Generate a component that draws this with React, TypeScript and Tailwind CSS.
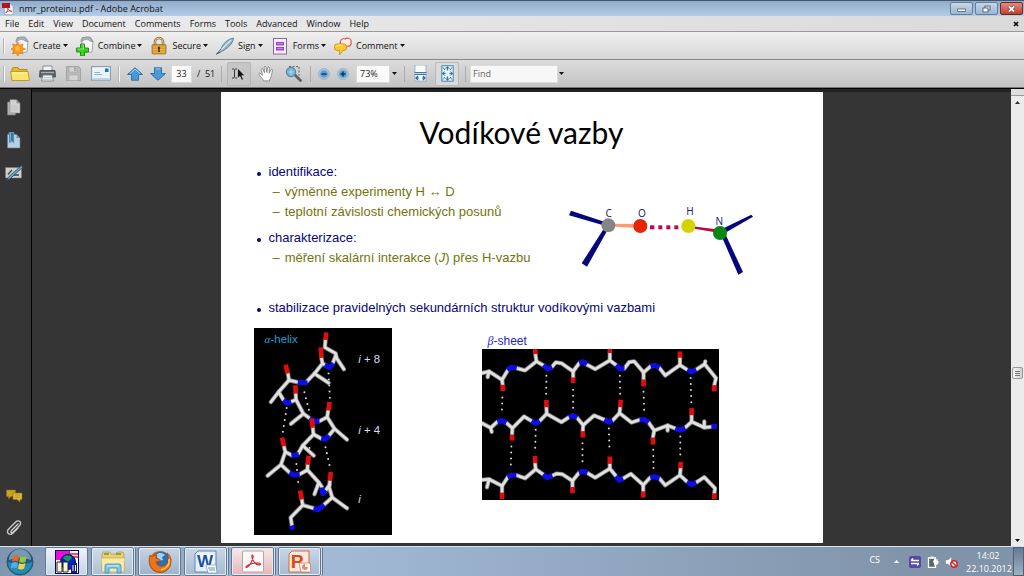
import { useState } from "react";
import type { ReactNode } from "react";

type Seg = number[];

const helixBonds: Seg[] = [
  [238, 60, 236, 82, 268, 100, 272, 115, 293, 147], [268, 108, 260, 128], [226, 115, 229, 130, 205, 160, 247, 188],
  [229, 130, 242, 138], [205, 160, 182, 184], [126, 160, 129, 180, 157, 186], [129, 180, 98, 215, 75, 245],
  [98, 215, 112, 238], [135, 244, 150, 238], [149, 220, 150, 238, 172, 280, 135, 310], [172, 280, 190, 293],
  [220, 302, 243, 290], [246, 270, 243, 290, 265, 325, 302, 357], [265, 325, 248, 345], [225, 354, 203, 342],
  [200, 320, 202, 342, 170, 375, 203, 405], [170, 375, 157, 398], [137, 404, 118, 394],
  [114, 378, 118, 394, 105, 432, 65, 465], [105, 432, 130, 455], [160, 461, 184, 448],
  [185, 430, 184, 448, 218, 485, 205, 520], [218, 485, 228, 500], [238, 510, 250, 492],
  [251, 480, 249, 500, 258, 530, 302, 562], [258, 530, 234, 551], [202, 562, 170, 553],
  [167, 535, 170, 553, 134, 590, 138, 615],
];
const helixN: Seg[] = [
  [236, 134, 250, 142, 262, 130], [155, 186, 184, 188], [112, 240, 124, 249, 136, 245], [190, 294, 205, 303, 220, 302],
  [225, 354, 238, 356, 249, 345], [136, 405, 158, 402], [130, 457, 145, 463, 161, 461], [226, 500, 230, 518, 238, 508],
  [202, 563, 216, 566, 234, 552], [136, 614, 140, 626],
];
const helixO: Seg[] = [
  [240, 37, 238, 60], [224, 82, 226, 113], [119, 134, 125, 160], [148, 195, 149, 220], [250, 244, 247, 270],
  [197, 294, 200, 322], [108, 351, 114, 377], [188, 405, 185, 432], [254, 454, 251, 480], [162, 509, 167, 536],
];
const helixDots: Seg[] = [
  [247, 160, 251, 232], [175, 216, 190, 274], [122, 263, 110, 338], [190, 382, 199, 370], [238, 380, 251, 438],
  [151, 430, 158, 500],
];

const sheetBonds: Seg[] = [
  [19, 130, 40, 125, 79, 150, 96, 122], [40, 125, 36, 142], [79, 150, 81, 165],
  [122, 115, 148, 122, 182, 95, 203, 107], [179, 73, 182, 95], [228, 112, 240, 98, 258, 101, 292, 125, 310, 101],
  [292, 125, 292, 143], [332, 104, 358, 118, 402, 92, 422, 107], [402, 70, 402, 92],
  [445, 117, 460, 97, 475, 95, 503, 128, 525, 109], [503, 128, 503, 149], [550, 114, 568, 137, 612, 106, 634, 120],
  [612, 83, 612, 106], [660, 120, 686, 103, 720, 145, 715, 166], [686, 103, 688, 95],
  [19, 280, 45, 294, 65, 276], [45, 294, 48, 306], [92, 279, 110, 295, 145, 260, 168, 274], [110, 295, 109, 314],
  [191, 274, 213, 252, 257, 277, 280, 262], [212, 232, 213, 252], [303, 263, 322, 286, 355, 257, 386, 270],
  [322, 286, 321, 304], [410, 272, 431, 250, 467, 278, 491, 270], [433, 232, 431, 250],
  [518, 278, 535, 302, 575, 287, 599, 296], [535, 302, 531, 323], [575, 287, 575, 302],
  [627, 294, 647, 276, 685, 293, 706, 291], [647, 256, 647, 276], [685, 293, 685, 275],
  [19, 450, 40, 448, 79, 468, 97, 441], [40, 448, 34, 472], [79, 468, 79, 488], [122, 436, 148, 445, 180, 418, 203, 434],
  [178, 400, 180, 418], [229, 438, 242, 431, 260, 433, 290, 453, 310, 428], [290, 453, 290, 471],
  [334, 429, 358, 443, 402, 416, 420, 438], [402, 402, 402, 416], [441, 446, 465, 432, 502, 465, 523, 443],
  [502, 465, 502, 484], [550, 445, 568, 466, 612, 436, 634, 456], [614, 415, 612, 436],
  [660, 458, 685, 442, 717, 475, 715, 490],
];
const sheetN: Seg[] = [
  [95, 121, 107, 112, 123, 115], [203, 106, 216, 118, 229, 112], [310, 99, 322, 96, 333, 104], [421, 106, 432, 117, 446, 117],
  [524, 110, 536, 107, 551, 113], [634, 120, 646, 127, 661, 120], [65, 276, 78, 272, 92, 279], [168, 273, 180, 281, 192, 273],
  [279, 262, 291, 257, 304, 264], [386, 269, 399, 277, 410, 272], [491, 270, 505, 269, 518, 278], [598, 296, 612, 301, 628, 294],
  [706, 290, 723, 290], [95, 441, 108, 436, 122, 436], [202, 434, 214, 443, 230, 437], [309, 428, 320, 424, 335, 429],
  [420, 439, 431, 451, 442, 446], [523, 443, 535, 440, 551, 445], [633, 456, 646, 464, 661, 458],
];
const sheetO: Seg[] = [
  [81, 165, 81, 184], [178, 58, 179, 73], [292, 143, 292, 160], [402, 58, 402, 70], [503, 149, 503, 170], [612, 65, 612, 84],
  [715, 166, 715, 185], [109, 314, 109, 332], [212, 210, 212, 232], [321, 304, 321, 323], [435, 210, 433, 232],
  [531, 323, 531, 344], [647, 235, 647, 256], [79, 488, 79, 508], [178, 378, 178, 400], [290, 471, 290, 490],
  [402, 380, 402, 402], [502, 484, 502, 503], [614, 396, 614, 415], [715, 490, 715, 508],
];
const sheetDots: Seg[] = [
  [80, 203, 78, 255], [212, 138, 211, 195], [292, 180, 292, 240], [432, 138, 433, 195], [503, 186, 505, 248],
  [644, 145, 646, 220], [107, 350, 105, 418], [180, 300, 178, 366], [320, 340, 320, 406], [399, 296, 401, 366],
  [532, 360, 533, 426], [613, 320, 613, 386],
];

function toPoints(s: Seg) {
  return s.join(" ");
}

function Sticks({ bonds, n, o, dots }: { bonds: Seg[]; n: Seg[]; o: Seg[]; dots: Seg[] }) {
  return (
    <g fill="none" strokeLinejoin="round">
      <g stroke="#d8d8d8" strokeWidth="6" strokeLinecap="round" strokeDasharray="0 18">
        {dots.map((s, i) => <polyline key={i} points={toPoints(s)} />)}
      </g>
      <g stroke="#858585" strokeWidth="13" strokeLinecap="round">
        {bonds.map((s, i) => <polyline key={i} points={toPoints(s)} />)}
      </g>
      <g stroke="#e2e2e2" strokeWidth="8" strokeLinecap="round">
        {bonds.map((s, i) => <polyline key={i} points={toPoints(s)} />)}
      </g>
      <g stroke="#0d0de8" strokeWidth="15">
        {n.map((s, i) => <polyline key={i} points={toPoints(s)} />)}
      </g>
      <g stroke="#e00d0d" strokeWidth="14">
        {o.map((s, i) => <polyline key={i} points={toPoints(s)} />)}
      </g>
    </g>
  );
}

function HelixFigure() {
  return (
    <svg viewBox="25 24 411 618" className="block h-[207px] w-[138px] bg-black" role="img" aria-label="α-helix">
      <Sticks bonds={helixBonds} n={helixN} o={helixO} dots={helixDots} />
      <g fontFamily="Liberation Sans, Arial, sans-serif">
        <text x="56" y="70" fontSize="34" fill="#1fa3dc">
          <tspan fontStyle="italic" fontFamily="Liberation Serif, serif">α</tspan>-helix
        </text>
        <g fontSize="34" fill="#dcdcf4">
          <text x="336" y="130"><tspan fontStyle="italic">i</tspan> + 8</text>
          <text x="336" y="341"><tspan fontStyle="italic">i</tspan> + 4</text>
          <text x="336" y="546" fontStyle="italic">i</text>
        </g>
      </g>
    </svg>
  );
}

function SheetFigure() {
  return (
    <svg viewBox="19 58 710 452" className="block h-[151px] w-[237px] bg-black" role="img" aria-label="β-sheet">
      <Sticks bonds={sheetBonds} n={sheetN} o={sheetO} dots={sheetDots} />
    </svg>
  );
}

function BondFigure() {
  return (
    <svg viewBox="0 0 660 300" className="block h-[100px] w-[220px]" role="img" aria-label="C O H N">
      <g fill="#06067c">
        <path d="M63 62 172 98 168 108 57 76z" />
        <path d="M164 112 174 118 111 230 95 220z" />
        <path d="M604 74 609 80 530 126 522 114z" />
        <path d="M513 135 525 130 579 246 565 254z" />
      </g>
      <path d="M175 101 270 102v13L175 109z" fill="#ff9a70" />
      <path d="M415 107 510 119v10L415 113z" fill="#b40a40" />
      <g fill="#b80c50">
        <rect x="300" y="106" width="13" height="12" /><rect x="325" y="106" width="12" height="12" />
        <rect x="349" y="106" width="12" height="12" /><rect x="373" y="106" width="12" height="12" />
      </g>
      <circle cx="175" cy="106" r="21" fill="#858585" />
      <circle cx="271" cy="108" r="21" fill="#e82406" />
      <circle cx="415" cy="108" r="21" fill="#d6d200" />
      <circle cx="510" cy="129" r="21" fill="#068612" />
      <g fontFamily="Noto Sans, sans-serif" fontSize="30" fill="#23237f" textAnchor="middle">
        <text x="176" y="80">C</text><text x="276" y="82">O</text>
        <text x="420" y="75">H</text><text x="508" y="104">N</text>
      </g>
    </svg>
  );
}

function Glyph({ box, className, children }: { box: string; className: string; children: ReactNode }) {
  return (
    <svg viewBox={box} className={className} aria-hidden="true">
      {children}
    </svg>
  );
}

function Caret() {
  return (
    <Glyph box="0 0 5 3" className="h-[3px] w-[5px] shrink-0">
      <path d="M0 0h5L2.500 3z" fill="#111" />
    </Glyph>
  );
}

function Grip() {
  return <span className="h-4 w-[2px] shrink-0 border-r border-[#f6f6f6] bg-[#b4b4b4]" />;
}

function Divider() {
  return <span className="h-4 w-px shrink-0 bg-[#aaa]" />;
}

const paperBack = (
  <>
    <path d="M6 1.500h8l3 3.500-1 11-10 1z" fill="#f4f6f7" stroke="#8e979c" strokeWidth=".8" />
    <path d="M5 4c2-3.500 8-4 10-2l2 4c-2-1-3 0-4-2-3-1-6 0-8 2z" fill="#aab2b6" stroke="#737c81" strokeWidth=".5" />
  </>
);

const tasks: { label: string; icon: ReactNode }[] = [
  {
    label: "Create",
    icon: (
      <>
        {paperBack}
        <path d="m7 6 1.500 3.200L12 8l-1 3.500 3.500 1.500-3.500 1.500L12 18l-3.500-1L7 20l-2-3-3.500 1 1-3.500L0 13l2.700-1.500L1.500 8 5 9z" fill="#f59a1c" stroke="#d8770b" strokeWidth=".6" />
        <circle cx="6.500" cy="12.500" r="2.500" fill="#ffb93c" />
      </>
    ),
  },
  {
    label: "Combine",
    icon: (
      <>
        {paperBack}
        <path d="M4.500 8h4v4h4v4h-4v4h-4v-4h-4v-4h4z" fill="#3fce22" stroke="#168a10" strokeWidth=".9" />
        <path d="M5.500 9h2v4h-6" fill="none" stroke="#a2f28a" strokeWidth=".7" />
      </>
    ),
  },
  {
    label: "Secure",
    icon: (
      <>
        <path d="M5 10V6a4 4 0 0 1 8 0v4" fill="none" stroke="#8f7443" strokeWidth="2.600" />
        <path d="M5 10V6a4 4 0 0 1 8 0v4" fill="none" stroke="#d9c28d" strokeWidth="1" />
        <rect x="2" y="8.500" width="14" height="9.500" rx="1" fill="#d69a35" stroke="#98691b" strokeWidth=".7" />
        <path d="M3 11h12M3 13.500h12M3 16h12" stroke="#eec063" strokeWidth=".8" />
        <path d="M9 10.500a1.300 1.300 0 0 1 .7 2.400L10 16H8l.3-3.100A1.300 1.300 0 0 1 9 10.500z" fill="#55380a" />
      </>
    ),
  },
  {
    label: "Sign",
    icon: (
      <>
        <path d="M0 18.500 5 13C7 7 12 3 17.500 2c0 3-3 9-11 13z" fill="#8fb0bf" stroke="#56727f" strokeWidth=".7" />
        <path d="M5.500 13.500 15 4" stroke="#dcecf2" strokeWidth="1.300" />
        <path d="m0 18.500 3-2.500 1.500.5z" fill="#324a55" />
      </>
    ),
  },
  {
    label: "Forms",
    icon: (
      <>
        <rect x="2.500" y="2.500" width="13" height="15.500" fill="#f7f1fb" stroke="#8568a0" />
        <rect x="5" y="6" width="8" height="3.500" fill="#a63fd0" /><rect x="5" y="11" width="8" height="3.500" fill="#a63fd0" />
        <path d="M6 7.700h6M6 12.700h6" stroke="#d9a6f0" strokeWidth=".8" />
      </>
    ),
  },
  {
    label: "Comment",
    icon: (
      <>
        <path d="M7 8c-2-3 1-6 4-5 3-2 7 0 6 3 1 3-2 5-4 4l-2 3z" fill="#fde9e6" stroke="#dd5443" strokeWidth="1.100" />
        <path d="M3 8h7q2.500 0 2.500 2.500V12q0 2.500-2.500 2.500H9L5.500 19v-4.500H3Q.5 14.500.5 12v-1.500Q.5 8 3 8z" fill="#fbc92d" stroke="#cc8c0c" strokeWidth=".8" />
        <path d="M2.500 10q.5-.8 2-.8h4" fill="none" stroke="#fff0a6" />
      </>
    ),
  },
];

const menus = ["File", "Edit", "View", "Document", "Comments", "Forms", "Tools", "Advanced", "Window", "Help"];

function ArrowIcon({ down = false }: { down?: boolean }) {
  return (
    <Glyph box="0 0 16 14" className="block h-[14px] w-[16px]">
      <path
        d={down ? "M4.500.8h7v5.700h4L8 13.300.5 6.500h4z" : "M8 .7 15.500 7.500h-4v5.700h-7V7.500h-4z"}
        fill="#4a99d6" stroke="#286ba6" strokeWidth=".9" strokeLinejoin="round"
      />
      <path d={down ? "M5.700 2h4.600" : "m3 6.500 5-4.300 5 4.300"} fill="none" stroke="#9fd2f4" strokeWidth="1" />
    </Glyph>
  );
}

function RoundIcon({ plus = false }: { plus?: boolean }) {
  return (
    <Glyph box="0 0 12 12" className="block h-[12px] w-[12px]">
      <circle cx="6" cy="6" r="5.400" fill="#a8cbe4" stroke="#8aa9c2" strokeWidth=".8" />
      <circle cx="6" cy="6" r="3.800" fill="#5ba1d4" />
      <path d={plus ? "M3.500 6h5M6 3.500v5" : "M3.500 6h5"} stroke="#12385e" strokeWidth="1.500" />
    </Glyph>
  );
}

function Toolbar() {
  const [page, setPage] = useState("33");
  const [find, setFind] = useState("");
  const [zoom, setZoom] = useState("73%");
  return (
    <div className="flex h-7 items-center border-b border-[#777] bg-gradient-to-b from-[#dcdcdc] to-[#c3c3c3] pl-[3px]">
      <Grip />
      <div className="ml-[5px] flex items-center gap-[9px]">
        <button aria-label="Open">
          <Glyph box="0 0 20 16" className="block h-4 w-5">
            <path d="M2 14V3l1-1.500h5l1 2h8V14z" fill="#e8b928" stroke="#a47f10" strokeWidth=".8" />
            <path d="M.6 5.500h17.500L19.400 14.500H2z" fill="#fde36d" stroke="#b78f17" strokeWidth=".8" />
            <path d="M2 7h15" stroke="#fff6b8" />
          </Glyph>
        </button>
        <button aria-label="Print">
          <Glyph box="0 0 17 17" className="block h-[17px] w-[17px]">
            <path d="M4 1h9v6H4z" fill="#f2f4f5" stroke="#71797d" strokeWidth=".8" />
            <path d="M1 5.500h15l.5 6.500H.5z" fill="#5b6469" stroke="#3d4549" strokeWidth=".8" />
            <path d="M2 7.500h13" stroke="#a4adb2" strokeWidth="1.200" />
            <path d="M4 10h9l1.500 6h-12z" fill="#edf1f3" stroke="#71797d" strokeWidth=".8" />
            <path d="M4.500 12.500h8M4 14.300h9" stroke="#a8b4ba" strokeWidth=".7" />
          </Glyph>
        </button>
        <button aria-label="Save" disabled>
          <Glyph box="0 0 17 17" className="block h-[17px] w-[17px]">
            <path d="M1.500 1.500h12l2 2v12h-14z" fill="#b9b9b9" stroke="#a2a2a2" />
            <path d="M4 2h8v5H4zM4 10h9v5.500H4z" fill="#d4d4d4" stroke="#a9a9a9" strokeWidth=".7" />
            <path d="M9 2.500h2v3.500H9z" fill="#a8a8a8" />
          </Glyph>
        </button>
        <button aria-label="E-mail">
          <Glyph box="0 0 20 15" className="block h-[15px] w-5">
            <rect x=".6" y=".6" width="18.800" height="13.500" fill="#eaf3fa" stroke="#7d98ac" />
            <path d="M2 12.500h16" stroke="#bed4e4" />
            <rect x="14" y="2.500" width="3.500" height="3.500" fill="#2470b8" />
            <path d="M3.500 6.500H9M3.500 8.500H11" stroke="#6c9fc9" strokeWidth=".8" />
          </Glyph>
        </button>
      </div>
      <div className="ml-[7px] flex items-center gap-[7px]">
        <Grip />
        <button aria-label="Previous page"><ArrowIcon /></button>
        <button aria-label="Next page"><ArrowIcon down /></button>
      </div>
      <input aria-label="Page" value={page} onChange={(e) => setPage(e.target.value)}
        className="ml-[5px] h-[18px] w-[21px] border border-[#d8d8d8] bg-[#fafafa] text-center text-[9px] text-[#222]" />
      <span className="ml-[5px] w-5 whitespace-nowrap text-[9px]">/&nbsp; 51</span>
      <span className="ml-[4px] flex"><Divider /></span>
      <button aria-label="Select tool" className="ml-[5px] flex h-6 w-6 items-center justify-center rounded-[2px] border border-[#b4b4b4] bg-[#c6c6c6]">
        <Glyph box="0 0 16 14" className="h-[14px] w-4">
          <path d="M1 2h1.500l1 .8 1-.8H6M3.500 2.800v7.400M1 11h1.500l1-.8 1 .8H6" fill="none" stroke="#333" strokeWidth="1" />
          <path d="M6.500 1v10.500L9 9.400l1.600 3.800 1.900-.8-1.700-3.700H14z" fill="#151515" stroke="#ececec" strokeWidth=".6" />
        </Glyph>
      </button>
      <button aria-label="Hand tool" className="ml-[7px]">
        <Glyph box="0 0 17 17" className="block h-[17px] w-[17px]">
          <path d="M5.500 15.800c-1-2.500-3.500-4.200-4.500-6.400-.5-1.300 1-1.700 1.800-.8l1.800 1.800L3.300 4.700c-.3-1.300 1.200-1.700 1.700-.4l1.500 3.500-.3-5.500c0-1.300 1.700-1.300 1.900 0l.7 5.200.8-4.800c.3-1.200 1.900-1 1.800.3l-.3 5.300 1.700-3.400c.6-1.100 2-.6 1.700.6-.8 3-1 7-3 9.500v1z" fill="#fff" stroke="#777" strokeWidth=".8" strokeLinejoin="round" />
        </Glyph>
      </button>
      <button aria-label="Marquee zoom" className="ml-[10px]">
        <Glyph box="0 0 18 17" className="block h-[17px] w-[18px]">
          <path d="M4 1.500h10v9" fill="none" stroke="#51646f" strokeDasharray="2 1.500" />
          <path d="m9.500 9.500 6 6" stroke="#596168" strokeWidth="2.800" strokeLinecap="round" />
          <circle cx="6" cy="7" r="4.600" fill="#6eb4dc" stroke="#6c8798" strokeWidth="1.200" />
          <path d="M3.500 7H9M6 4.500V10" stroke="#a9d9f2" strokeWidth="1.200" />
        </Glyph>
      </button>
      <div className="ml-[7px] flex items-center gap-[7px]">
        <Divider />
        <button aria-label="Zoom out"><RoundIcon /></button>
        <button aria-label="Zoom in"><RoundIcon plus /></button>
        <select aria-label="Zoom level" value={zoom} onChange={(e) => setZoom(e.target.value)}
          className="h-[18px] w-[34px] appearance-none border border-[#d8d8d8] bg-[#fafafa] pl-[3px] text-[9px] leading-4 text-[#222]">
          <option>73%</option>
          <option>100%</option>
        </select>
      </div>
      <span className="ml-[2px] flex"><Caret /></span>
      <span className="ml-[7px] flex"><Divider /></span>
      <button aria-label="Fit width" className="ml-[9px]">
        <Glyph box="0 0 13 17" className="block h-[17px] w-[13px]">
          <path d="M1 0h11v7.500H1zM1 9.500h11V16H1z" fill="#f6fbfe" stroke="#8aa5b8" strokeWidth=".7" />
          <path d="M.5 7.500h12M.5 9.500h12" stroke="#3c7ba8" strokeWidth="1.200" />
          <path d="m4 11-2 2 2 2M9 11l2 2-2 2M2 13h3M8 13h3" fill="none" stroke="#226ba6" strokeWidth="1.200" />
        </Glyph>
      </button>
      <button aria-label="Fit page" className="ml-2 flex h-6 w-6 items-center justify-center rounded-[2px] border border-[#b8b8b8] bg-[#dadada]">
        <Glyph box="0 0 13 17" className="h-[17px] w-[13px]">
          <path d="M.8.800h11.400v15.400H.8z" fill="#e9f5fc" stroke="#4584ae" />
          <path d="M6.500 1.500v4M6.500 11.500v4M1.500 8.500h3M8.500 8.500h3" stroke="#2d78ae" strokeWidth="1.400" />
          <path d="M4.500 3.800l2-2 2 2M4.500 13.200l2 2 2-2M3.500 6.500l-2 2 2 2M9.500 6.500l2 2-2 2M2 2.500l2 2.500M11 2.500 9 5M2 14.500 4 12M11 14.500 9 12" fill="none" stroke="#2d78ae" strokeWidth="1" />
        </Glyph>
      </button>
      <span className="ml-[6px] flex"><Divider /></span>
      <input aria-label="Find" placeholder="Find" value={find} onChange={(e) => setFind(e.target.value)}
        className="ml-[4px] h-[18px] w-[88px] border border-[#dcdcdc] bg-[#f7f7f7] pl-[2px] text-[9px] placeholder:text-[#666]" />
      <button aria-label="Find options" className="ml-px"><Caret /></button>
    </div>
  );
}

function SidePanel() {
  return (
    <nav aria-label="Panels" className="flex w-8 shrink-0 flex-col items-center border-r border-black bg-[#353535] pt-[10px] pb-[10px] pr-[3px]">
      <button aria-label="Pages" className="mb-4">
        <Glyph box="0 0 16 17" className="block h-[17px] w-4">
          <path d="M1.500 3h8v13h-8z" fill="#b2b2b2" stroke="#777" strokeWidth=".6" />
          <path d="M4 .7h6.500l3.500 3.500V14H4z" fill="#d2d2d2" stroke="#8a8a8a" strokeWidth=".6" />
          <path d="M10.500.700v3.500H14" fill="#8b8b8b" />
          <path d="M5.500 7h6M5.500 9h6M5.500 11h6" stroke="#bababa" strokeWidth=".7" />
        </Glyph>
      </button>
      <button aria-label="Bookmarks" className="mb-4">
        <Glyph box="0 0 16 17" className="block h-[17px] w-4">
          <path d="M1.500 2.500h9l3.500 3.500V16h-12.500z" fill="#b9cede" stroke="#607f97" strokeWidth=".6" />
          <path d="M10.500 2.500V6H14" fill="#7190a6" />
          <path d="M3 .5h5v11L5.500 9.200 3 11.500z" fill="#347aaa" stroke="#9fc8e0" strokeWidth=".5" />
          <path d="M4.500 1v8" stroke="#91bfdc" strokeWidth=".7" />
        </Glyph>
      </button>
      <button aria-label="Signatures">
        <Glyph box="0 0 18 16" className="block h-4 w-[18px]">
          <path d="M.5 2.500h16v10.500H.5z" fill="#cfcfcf" stroke="#777" strokeWidth=".5" />
          <path d="M3 9.500 7 5M8 10h6" fill="none" stroke="#444" strokeWidth="1.300" />
          <path d="m1.500 15.500 2-3.500L16.500.500l1.200 1.700L5 13.800z" fill="#6ba7cb" stroke="#25465c" strokeWidth=".8" />
        </Glyph>
      </button>
      <div className="flex-1" />
      <button aria-label="Comments" className="mb-4">
        <Glyph box="0 0 18 14" className="block h-[14px] w-[18px]">
          <path d="M1.500 1h9v6.500H6L3.500 10V7.500h-2z" fill="#c9a124" stroke="#8f6d11" strokeWidth=".6" strokeLinejoin="round" />
          <path d="M8 4h9v6.500h-2V13l-3-2.500H8z" fill="#e0bd3c" stroke="#8f6d11" strokeWidth=".6" strokeLinejoin="round" />
          <path d="M10 6h5M10 8.200h5" stroke="#a5831d" strokeWidth=".8" />
        </Glyph>
      </button>
      <button aria-label="Attachments">
        <Glyph box="0 0 16 17" className="block h-[17px] w-4">
          <path d="m12 5-6.500 6.500c-1.500 1.600.3 3 1.600 1.700l6.300-6.500c3-3.300-.8-6.500-3.700-3.700L2.500 10.200c-3 3.300 1.200 7 4.300 4l5-5" fill="none" stroke="#cfcfcf" strokeWidth="1.300" strokeLinecap="round" />
        </Glyph>
      </button>
    </nav>
  );
}

function Slide() {
  return (
    <article className="flex h-[451px] w-[602px] shrink-0 flex-col bg-white text-[13px] leading-5 text-[#060678] [font-family:'Liberation_Sans',Arial,sans-serif]">
      <h1 className="pt-5 text-center text-[30px] leading-10 text-black [font-family:Lato,Calibri,sans-serif]">Vodíkové vazby</h1>
      <div className="flex pt-[10px]">
        <ul className="w-[329px] pl-[36px]">
          <li>
            <Bullet>identifikace:</Bullet>
            <ul className="pl-4 text-[#74740c]">
              <Dash>výměnné experimenty H ↔ D</Dash>
              <Dash>teplotní závislosti chemických posunů</Dash>
            </ul>
          </li>
          <li className="pt-[6px]">
            <Bullet>charakterizace:</Bullet>
            <ul className="pl-4 text-[#74740c]">
              <Dash>měření skalární interakce (<i>J</i>) přes H-vazbu</Dash>
            </ul>
          </li>
        </ul>
        <div className="pt-7"><BondFigure /></div>
      </div>
      <div className="pt-2 pl-[36px]"><Bullet>stabilizace pravidelných sekundárních struktur vodíkovými vazbami</Bullet></div>
      <div className="flex gap-[90px] pt-[10px] pl-[33px]">
        <HelixFigure />
        <figure className="pt-[5px]">
          <figcaption className="pl-[6px] text-[12px] leading-4 text-[#2222d8]">
            <i className="[font-family:'Liberation_Serif',serif]">β</i>-sheet
          </figcaption>
          <SheetFigure />
        </figure>
      </div>
    </article>
  );
}

function Bullet({ children }: { children: ReactNode }) {
  return (
    <p className="flex items-center gap-2">
      <span className="mt-1 size-1 shrink-0 rounded-full bg-[#060678]" />
      {children}
    </p>
  );
}

function Dash({ children }: { children: ReactNode }) {
  return (
    <li className="flex gap-[5px]">
      <span>–</span>
      <span>{children}</span>
    </li>
  );
}

function ScrollBar() {
  return (
    <div className="flex w-[13px] shrink-0 flex-col items-center bg-[#ececec]">
      <span className="h-[7px] w-full border-b border-[#999] bg-[#dedede]" />
      <button aria-label="Scroll up" className="flex h-3 items-center">
        <Glyph box="0 0 5 3" className="h-[3px] w-[5px]"><path d="M0 3h5L2.500 0z" fill="#333" /></Glyph>
      </button>
      <div className="flex w-full flex-1 flex-col">
        <span className="grow-[260]" />
        <span className="mx-px flex h-[12px] flex-col items-center justify-center gap-px rounded-[2px] border border-[#999] bg-gradient-to-r from-[#f8f8f8] to-[#cfcfcf]">
          <i className="h-px w-[5px] bg-[#777]" /><i className="h-px w-[5px] bg-[#777]" /><i className="h-px w-[5px] bg-[#777]" />
        </span>
        <span className="grow-[155]" />
      </div>
      <button aria-label="Scroll down" className="flex h-3 items-center"><Caret /></button>
    </div>
  );
}

const apps: { label: string; tone: string; stacked?: boolean; icon: ReactNode }[] = [
  {
    label: "Commander", tone: "from-[#eef3f8] to-[#c3d3e4]",
    icon: (
      <>
        <rect x=".5" y=".5" width="23" height="23" fill="#fff" stroke="#050560" />
        <path d="M1 1h14v9H1z" fill="#f00bd8" /><path d="M13 4h10M13 7h10" stroke="#f01055" strokeWidth="1.500" />
        <circle cx="13" cy="12" r="7.500" fill="#0b20c4" stroke="#031048" />
        <path d="M8 8c3-4 8-3 9 0l-4 4zM15 16l4-3-1 5z" fill="#0b9c62" />
        <path d="M2 12h5v10H2zM8 12h5v10H8z" fill="#fdf9d8" stroke="#222" />
        <path d="M16 13h6v10h-6z" fill="#121b88" /><path d="M18 15v6M20.500 15v6" stroke="#fff" />
      </>
    ),
  },
  {
    label: "Explorer", tone: "from-[#cfdcea] to-[#aabfd6]", stacked: true,
    icon: (
      <>
        <path d="M1 5l1-3h7l1 2h5l1-2h6l1 3v16H1z" fill="#eccd70" stroke="#b39642" strokeWidth=".7" />
        <path d="M3 4h5M15 4h5" stroke="#559e4c" strokeWidth="1.500" />
        <path d="M0 8h24l-1 14H1z" fill="#fbeaa6" stroke="#c4a650" strokeWidth=".7" />
        <path d="M4 23v-7q0-2 2-2h12q2 0 2 2v7h-4v-5H8v5z" fill="#7fc4ec" stroke="#398fc2" strokeWidth=".8" />
        <path d="M6 16h12" stroke="#d9f3ff" />
      </>
    ),
  },
  {
    label: "Firefox", tone: "from-[#c5d4e4] to-[#9db3cb]",
    icon: (
      <>
        <circle cx="12" cy="12" r="11" fill="#df6510" />
        <circle cx="13" cy="10" r="8.500" fill="#2c6fb6" />
        <path d="M8 5c3-3 7-2 9 0l-3 2 1 3-4 1z" fill="#9bd4f2" />
        <path d="M2 5c-2 5-1 15 8 17 8 2 14-5 13-13-1-3-2-5-4-6 2 5 2 12-4 13-5 1-6-2-7-4l4-1c1-1 0-2-2-2l-2-1 1-3C6 5 5 6 4 7z" fill="#e8761a" stroke="#a63c0c" strokeWidth=".7" />
        <path d="M21 9c1 6-3 10-8 11" fill="none" stroke="#ffd04a" strokeWidth="1.500" />
      </>
    ),
  },
  {
    label: "Word", tone: "from-[#c9d7e7] to-[#a6bad1]", stacked: true,
    icon: (
      <>
        <path d="M4 1h18v21H1V4z" fill="#e4eef8" stroke="#5a86bb" />
        <path d="M4 4h16v12H4z" fill="#f7fbff" />
        <text x="11" y="17" textAnchor="middle" fontFamily="Liberation Sans" fontSize="17" fontWeight="700" fill="#204fa5">W</text>
        <path d="M12 15h10l1 8H14z" fill="#fff" stroke="#5a86bb" strokeWidth=".6" /><path d="M14 18h7M15 20h6" stroke="#6990c5" />
      </>
    ),
  },
  {
    label: "Adobe Acrobat", tone: "from-[#f8e9e9] to-[#e7b5b9]", stacked: true,
    icon: (
      <>
        <rect x="1.500" y="1" width="21" height="21" rx="1" fill="#faf8f8" stroke="#aaa" />
        <path d="M11.300 5c-1.300 0 .2 5.500 2.700 8 2.500 2.400 5.800 2.300 5.400 1-.4-1.400-7-1.300-11 .4-3 1.300-4.200 3-3 3.100 2.300 0 6.800-7.500 6.800-11 0-1-.4-1.500-.9-1.500z" fill="none" stroke="#cf2630" strokeWidth="1.100" />
      </>
    ),
  },
  {
    label: "PowerPoint", tone: "from-[#c9d7e7] to-[#a6bad1]", stacked: true,
    icon: (
      <>
        <path d="M4 1h17v21H1V4z" fill="#fbe9df" stroke="#d76638" />
        <text x="9" y="18" textAnchor="middle" fontFamily="Liberation Sans" fontSize="19" fontWeight="700" fill="#dc4a16">P</text>
        <path d="M11 13h11l1 9H13z" fill="#fff" stroke="#d76638" strokeWidth=".7" />
        <circle cx="17" cy="17" r="3" fill="#e78a60" /><path d="M17 17v-3a3 3 0 0 1 3 3z" fill="#fff" />
      </>
    ),
  },
];

function Taskbar() {
  return (
    <footer className="flex h-[30px] shrink-0 items-center border-t border-[#d6e2ee] bg-gradient-to-r from-[#7f95b0] via-[#a3bbd8] via-30% to-[#8093a9] to-90% pl-[6px]">
      <button aria-label="Start" className="mr-[11px]">
        <Glyph box="0 0 28 28" className="block size-7">
          <circle cx="14" cy="14" r="13" fill="#245c84" stroke="#34506a" />
          <path d="M2 14a12 12 0 0 0 24 0q-12 5-24 0z" fill="#1d8fb5" />
          <path d="M3 12a11 11 0 0 1 22 0q-11-5-22 0z" fill="#8faec3" opacity=".75" />
          <path d="M7 8q3-2 6 0l-1 5.500q-3-1.500-6 .2z" fill="#ee6529" /><path d="M14.200 8.500q3 1.500 6.500-.3l-1.200 5.600q-3 1.700-6.300.2z" fill="#93ca42" />
          <path d="M5.800 15q3-1.700 6-.2l-1 5.500q-3-1.500-6 .1z" fill="#55aeea" /><path d="M13 15.300q3.200 1.500 6.400-.2l-1.200 5.500q-3 1.700-6.200.2z" fill="#fbd03b" />
        </Glyph>
      </button>
      <div className="flex gap-[2px]">
        {apps.map((a) => (
          <div key={a.label} className={a.stacked ? "rounded-[2px] border-r border-[#63788f] bg-[#d5e0eb] pr-px" : "pr-px"}>
            <button aria-label={a.label} className={`flex h-[29px] w-[43px] items-center justify-center rounded-[2px] border border-[#63788f] bg-gradient-to-b shadow-[inset_0_0_0_1px_#e2ebf4] ${a.tone}`}>
              <Glyph box="0 0 24 24" className="size-6">{a.icon}</Glyph>
            </button>
          </div>
        ))}
      </div>
      <div className="ml-auto flex h-full items-center text-[9px] text-white">
        <span className="mr-[14px] pb-1">CS</span>
        <button aria-label="Hidden icons" className="mr-[10px]">
          <Glyph box="0 0 5 3" className="h-[3px] w-[5px]"><path d="M0 3h5L2.500 0z" fill="#fff" /></Glyph>
        </button>
        <Glyph box="0 0 12 12" className="mr-[6px] size-3">
          <rect width="12" height="12" rx="2" fill="#5549a8" />
          <path d="M2 4.500h8M2 7.500h8M4 2.500l-2 2M8 9.500l2-2" stroke="#fff" strokeWidth="1.300" />
        </Glyph>
        <Glyph box="0 0 12 12" className="mr-[6px] size-3">
          <path d="M1.500 2h7v9.500h-7z" fill="#59636c" stroke="#fff" strokeWidth="1.300" />
          <path d="M3.500.500h3v2h-3z" fill="#fff" /><path d="M6 5h5v2.500L8.500 9v3M7.500 3v2M10 3v2" fill="#fff" stroke="#fff" />
        </Glyph>
        <Glyph box="0 0 13 12" className="mr-2 h-3 w-[13px]">
          <path d="M.5 4h2.500L6.500.500v11L3 8H.5z" fill="#fff" stroke="#66727e" strokeWidth=".4" />
          <circle cx="9" cy="8" r="3.200" fill="#fff" stroke="#d52128" strokeWidth="1.500" /><path d="m7 6 4 4" stroke="#d52128" strokeWidth="1.400" />
        </Glyph>
        <time className="w-[44px] text-center text-[9px] leading-[13px]">14:02<br />22.10.2012</time>
        <button aria-label="Show desktop" className="ml-[3px] h-full w-[11px] border border-[#4e6072] bg-gradient-to-b from-[#657b92] to-[#9fb2c4]" />
      </div>
    </footer>
  );
}

export default function App() {
  return (
    <div className="flex min-h-screen flex-col bg-[#353535] text-[9px] text-[#111] [font-family:'Open_Sans','Noto_Sans',sans-serif]">
      <header>
        <div className="flex h-4 items-center border-t border-[#43566e] bg-gradient-to-b from-[#91abc9] to-[#b3cce8] pl-[2px]">
          <Glyph box="0 0 12 12" className="size-3">
            <path d="M2.500 1h6L11 3.500v8H2.500z" fill="#fff" stroke="#999" strokeWidth=".6" />
            <path d="M0 0h8v5H0z" fill="#b71420" />
            <path d="M5.500 4c-.7 0 1.500 5 4.500 4.500C9 7 5 8 3.500 10 5 10 6.500 6 5.500 4z" fill="none" stroke="#d2222e" strokeWidth=".8" />
          </Glyph>
          <h2 className="ml-[5px]">nmr_proteinu.pdf - Adobe Acrobat</h2>
          <div className="ml-auto flex gap-[2px] pr-px">
            <button aria-label="Minimize" className="flex h-[13px] w-[23px] items-center justify-center rounded-[2px] border border-[#647d9b] bg-gradient-to-b from-[#c5d7ea] to-[#9cb6d2]">
              <Glyph box="0 0 9 8" className="h-2 w-[9px]"><rect x=".7" y="4" width="7.600" height="2.500" fill="#fff" stroke="#4e5d6c" strokeWidth=".8" /></Glyph>
            </button>
            <button aria-label="Restore" className="flex h-[13px] w-[23px] items-center justify-center rounded-[2px] border border-[#647d9b] bg-gradient-to-b from-[#c5d7ea] to-[#9cb6d2]">
              <Glyph box="0 0 9 8" className="h-2 w-[9px]">
                <rect x="3" y="1" width="5" height="4" fill="#eee" stroke="#4e5d6c" strokeWidth=".9" /><rect x="1" y="3" width="5" height="4" fill="#fff" stroke="#4e5d6c" strokeWidth=".9" />
              </Glyph>
            </button>
            <button aria-label="Close" className="flex h-[13px] w-[23px] items-center justify-center rounded-[2px] border border-[#6f2922] bg-gradient-to-b from-[#de8d80] to-[#be3d2c]">
              <Glyph box="0 0 9 8" className="h-2 w-[9px]"><path d="m2 1.500 5 5m0-5-5 5" stroke="#5c3330" strokeWidth="3" /><path d="m2 1.500 5 5m0-5-5 5" stroke="#fff" strokeWidth="1.800" /></Glyph>
            </button>
          </div>
        </div>
        <nav aria-label="Menu" className="flex h-4 items-center gap-[9px] border-b border-[#999] bg-gradient-to-r from-[#ececec] to-[#dadada] pl-[5px]">
          {menus.map((m) => <button key={m}>{m}</button>)}
          <button aria-label="Close document" className="mr-[5px] ml-auto">
            <Glyph box="0 0 6 6" className="block size-[6px]"><path d="m1 1 4 4m0-4-4 4" stroke="#111" strokeWidth="1.700" /></Glyph>
          </button>
        </nav>
        <div className="flex h-7 items-center border-b border-[#888] bg-gradient-to-b from-[#f0f0f0] to-[#d6d6d6] pl-[3px]">
          <Grip />
          <div className="ml-[6px] flex items-center gap-2">
            {tasks.map((t) => (
              <button key={t.label} className="flex items-center gap-[2px]">
                <Glyph box="0 0 18 20" className="mr-[2px] h-5 w-[18px]">{t.icon}</Glyph>
                {t.label}
                <Caret />
              </button>
            ))}
          </div>
        </div>
        <Toolbar />
      </header>
      <div className="flex flex-1 border-t border-black">
        <SidePanel />
        <main className="flex flex-1 justify-center border-t-[3px] border-[#222] pb-[3px]">
          <Slide />
        </main>
        <ScrollBar />
      </div>
      <Taskbar />
    </div>
  );
}
